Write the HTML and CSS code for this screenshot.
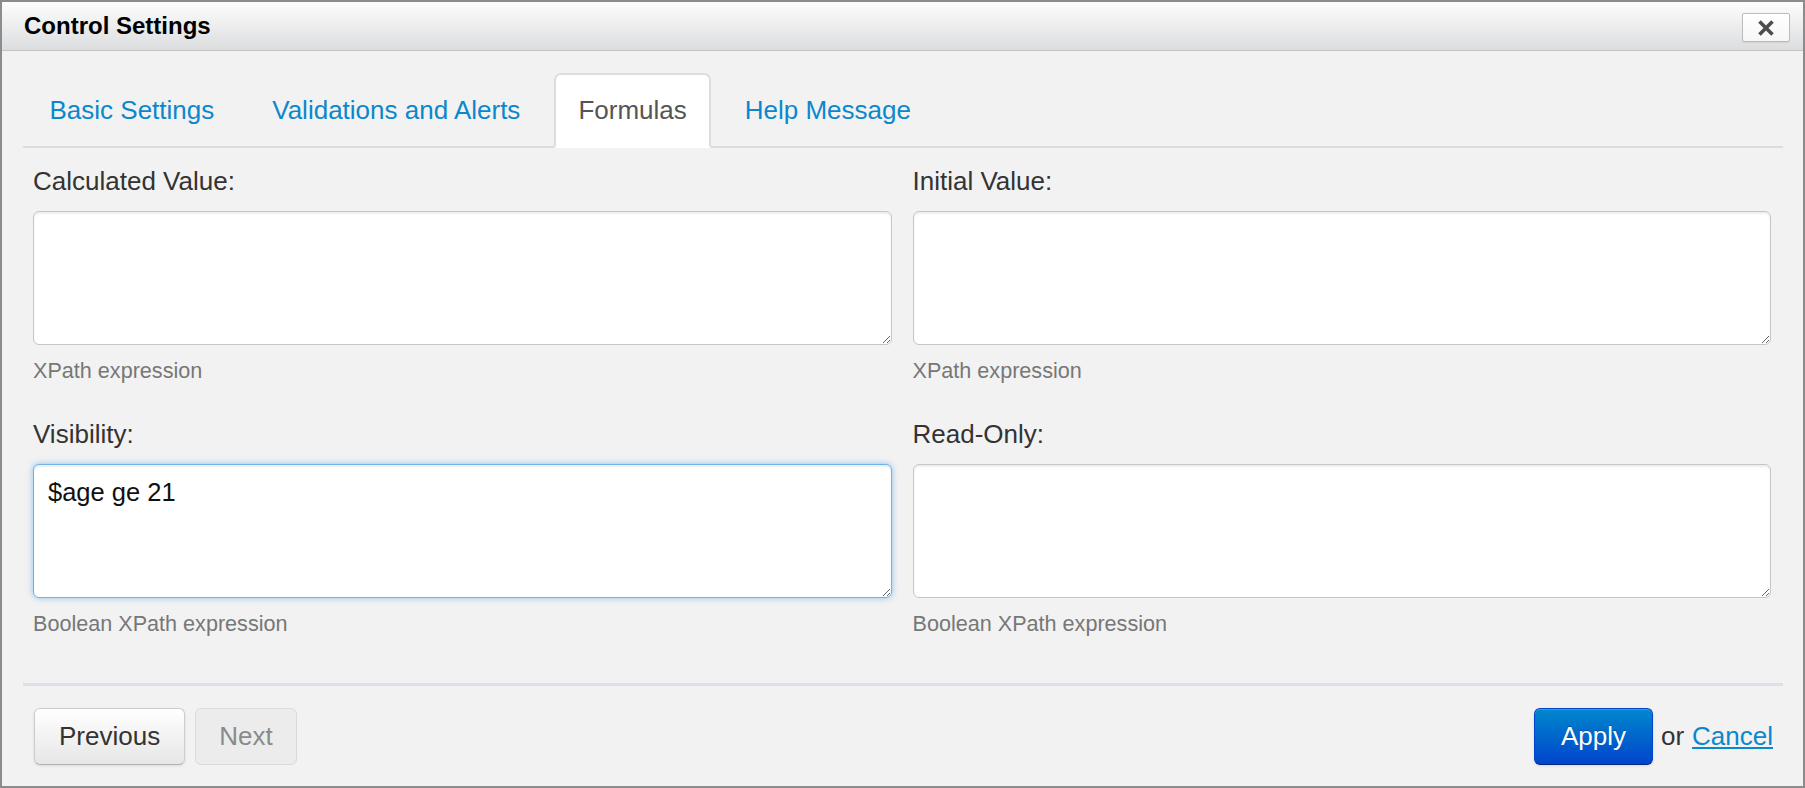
FILE: index.html
```html
<!DOCTYPE html>
<html>
<head>
<meta charset="utf-8">
<title>Control Settings</title>
<link rel="stylesheet" href="styles.css">
</head>
<body>
<div class="dialog">
  <div class="hd">
    <span class="title">Control Settings</span>
    <button class="close" type="button" aria-label="Close">
      <svg width="18" height="18" viewBox="0 0 18 18"><path d="M2.5 2.5 L15.5 15.5 M15.5 2.5 L2.5 15.5" stroke="#4d4d4d" stroke-width="3.6" stroke-linecap="butt" fill="none"/></svg>
    </button>
  </div>
  <div class="bd">
    <ul class="tabs">
      <li><a href="#">Basic Settings</a></li>
      <li><a href="#">Validations and Alerts</a></li>
      <li class="active"><a href="#">Formulas</a></li>
      <li><a href="#">Help Message</a></li>
    </ul>
    <div class="fields">
      <div class="field">
        <label>Calculated Value:</label>
        <textarea></textarea>
        <div class="help">XPath expression</div>
      </div>
      <div class="field">
        <label>Initial Value:</label>
        <textarea></textarea>
        <div class="help">XPath expression</div>
      </div>
      <div class="field">
        <label>Visibility:</label>
        <textarea class="focused">$age ge 21</textarea>
        <div class="help">Boolean XPath expression</div>
      </div>
      <div class="field">
        <label>Read-Only:</label>
        <textarea></textarea>
        <div class="help">Boolean XPath expression</div>
      </div>
    </div>
    <div class="footer">
      <div class="nav">
        <button class="btn" type="button">Previous</button>
        <button class="btn disabled" type="button">Next</button>
      </div>
      <div class="actions">
        <button class="btn primary" type="button">Apply</button>
        <span class="or">or</span>
        <a class="cancel" href="#">Cancel</a>
      </div>
    </div>
  </div>
</div>
</body>
</html>
```
FILE: styles.css
```css
html, body {
  margin: 0;
  padding: 0;
  background: #f2f2f2;
}

body {
  font-family: "Liberation Sans", Arial, Helvetica, sans-serif;
  color: #333;
}

.dialog {
  width: 1805px;
  height: 788px;
  box-sizing: border-box;
  border: 2px solid #8c8c8c;
  background: #f2f2f2;
  display: flex;
  flex-direction: column;
}

.hd {
  height: 48px;
  border-bottom: 1px solid #c4c4c4;
  background: linear-gradient(#fdfdfd, #dcdddf);
  display: flex;
  align-items: center;
  justify-content: space-between;
  padding: 0 13px 0 22px;
}

.title {
  font-weight: bold;
  font-size: 24px;
  color: #000;
}

.close {
  width: 48px;
  height: 29px;
  margin-top: 3px;
  padding: 0;
  border: 1px solid #bcbcbc;
  border-radius: 2px;
  background: linear-gradient(#ffffff, #f6f6f6);
  box-shadow: 0 1px 1px rgba(0, 0, 0, 0.08);
  display: flex;
  align-items: center;
  justify-content: center;
}

.bd {
  flex: 1;
  padding: 22px 20px 0 21px;
  display: flex;
  flex-direction: column;
}

.tabs {
  list-style: none;
  margin: 0;
  padding: 0 0 0 2px;
  display: flex;
  border-bottom: 2px solid #dddddd;
}

.tabs li {
  margin: 0 9px -2px 0;
}

.tabs a {
  display: block;
  padding: 0 22.5px;
  line-height: 71px;
  font-size: 26px;
  color: #0a88cd;
  text-decoration: none;
  border: 2px solid transparent;
  border-radius: 7px 7px 0 0;
}

.tabs li.active a {
  color: #555;
  background: #fff;
  border-color: #dddddd;
  border-bottom-color: #fff;
}

.fields {
  display: grid;
  grid-template-columns: 1fr 1fr;
  column-gap: 21px;
  row-gap: 35px;
  padding: 18px 12px 0 10px;
}

.field label {
  display: block;
  font-size: 26px;
  line-height: 30px;
  color: #333;
  margin-bottom: 15px;
}

.field textarea {
  display: block;
  width: 100%;
  height: 134px;
  box-sizing: border-box;
  margin: 0;
  padding: 12px 14px;
  font-family: "Liberation Sans", Arial, Helvetica, sans-serif;
  font-size: 25.5px;
  line-height: 30px;
  color: #111;
  background: #fff;
  border: 1px solid #c6c6c6;
  border-radius: 6px;
  box-shadow: inset 0 2px 2px rgba(0, 0, 0, 0.07);
  outline: none;
}

.field textarea.focused {
  border: 1px solid #6fb3ea;
  box-shadow: inset 0 2px 2px rgba(0, 0, 0, 0.07), 0 0 6px rgba(82, 168, 236, 0.65);
}

.help {
  margin-top: 13px;
  font-size: 21.6px;
  line-height: 26px;
  color: #777;
}

.footer {
  margin-top: 46px;
  border-top: 3px solid #dfdfea;
  padding: 22px 10px 0 11px;
  display: flex;
  justify-content: space-between;
  align-items: center;
}

.nav {
  display: flex;
  gap: 10px;
}

.actions {
  display: flex;
  align-items: center;
}

.btn {
  font-family: "Liberation Sans", Arial, Helvetica, sans-serif;
  font-size: 26px;
  line-height: 31px;
  padding: 12px 24px;
  color: #333;
  border: 1px solid #cccccc;
  border-bottom-color: #b3b3b3;
  border-radius: 6px;
  background: linear-gradient(#ffffff, #e6e6e6);
  box-shadow: inset 0 1px 0 rgba(255, 255, 255, 0.2), 0 1px 3px rgba(0, 0, 0, 0.1);
}

.btn.disabled {
  color: #8a8a8a;
  background: #ececec;
  border-color: #dadada;
  box-shadow: none;
  padding: 12px 23px;
}

.btn.primary {
  color: #fff;
  padding: 12px 26px;
  background: linear-gradient(#0088cc, #0044cc);
  border-color: #0044cc #0044cc #002a80;
  text-shadow: 0 -1px 0 rgba(0, 0, 0, 0.25);
}

.or {
  font-size: 26px;
  color: #333;
  margin: 0 8px;
}

.cancel {
  font-size: 26px;
  color: #0a88cd;
  text-decoration: underline;
}
```
